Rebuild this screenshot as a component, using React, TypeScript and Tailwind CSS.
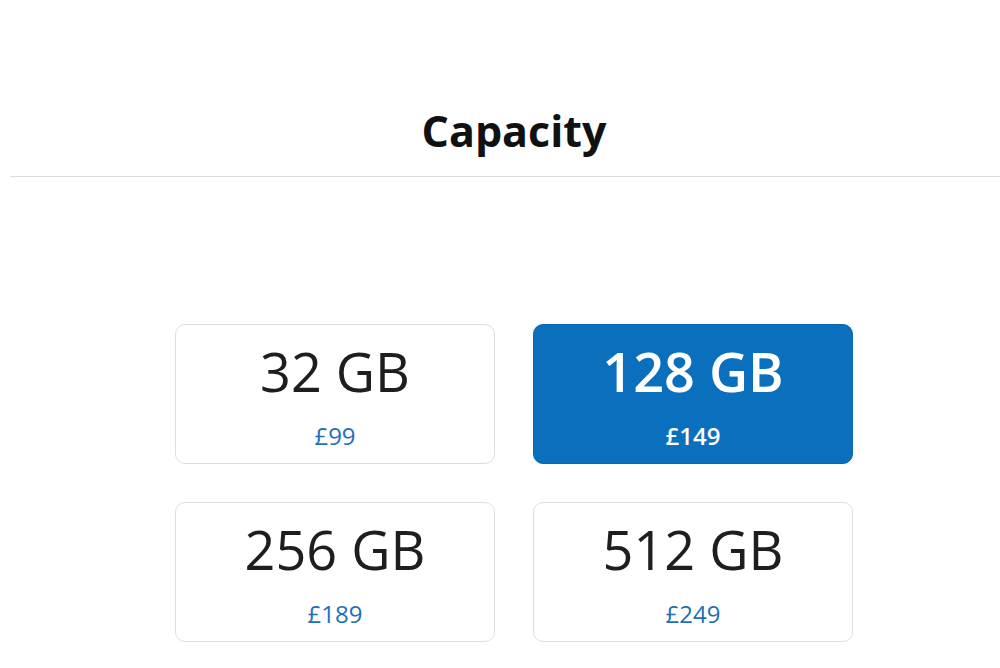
const options = [
  { size: "32 GB", price: "£99", selected: false },
  { size: "128 GB", price: "£149", selected: true },
  { size: "256 GB", price: "£189", selected: false },
  { size: "512 GB", price: "£249", selected: false },
];

export default function App() {
  return (
    <div className="w-[1000px] h-[668px] overflow-hidden bg-white font-['Open_Sans',sans-serif]">
      <div className="ml-[10px] w-[1008px]">
        <div className="h-[177px] pt-[109px] border-b border-[#dcdcdc] text-center">
          <h2 className="text-[43px] leading-[43px] font-bold text-[#111]">Capacity</h2>
        </div>

        <div className="mt-[147px] grid grid-cols-[320px_320px] gap-x-[38px] gap-y-[38px] justify-center">
          {options.map((o) => (
            <button
              key={o.size}
              className={
                o.selected
                  ? "h-[140px] pt-[19px] rounded-[10px] border border-[#0b68b0] bg-[#0a6fbc] text-white flex flex-col items-center"
                  : "h-[140px] pt-[19px] rounded-[10px] border border-[#dedede] bg-white text-[#1e1e1e] flex flex-col items-center"
              }
            >
              <span
                className={
                  o.selected
                    ? "text-[54px] leading-[54px] font-semibold"
                    : "text-[54px] leading-[54px] font-medium"
                }
              >
                {o.size}
              </span>
              <span
                className={
                  o.selected
                    ? "mt-[26px] text-[24px] leading-[24px] font-semibold text-white"
                    : "mt-[26px] text-[24px] leading-[24px] text-[#1f6fb8]"
                }
              >
                {o.price}
              </span>
            </button>
          ))}
        </div>
      </div>
    </div>
  );
}
